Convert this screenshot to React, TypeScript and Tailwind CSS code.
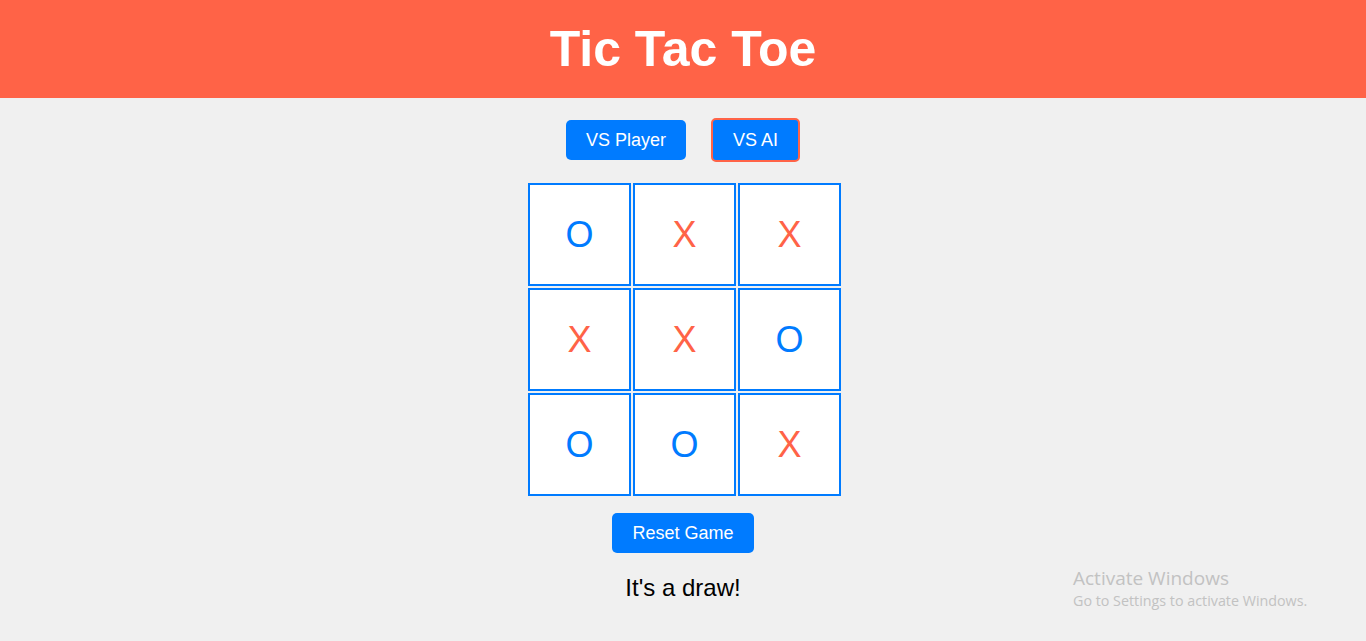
import React, { useState } from "react";

type Cell = "X" | "O" | null;

const START: Cell[] = ["O", "X", "X", "X", "X", "O", "O", "O", "X"];

export default function App() {
  const [board, setBoard] = useState<Cell[]>(START);
  const [mode, setMode] = useState<"player" | "ai">("ai");

  const reset = () => setBoard(Array(9).fill(null));

  return (
    <div className="min-h-[641px] bg-[#f0f0f0] font-['Liberation_Sans',Arial,sans-serif] text-black relative">
      <header className="h-[98px] bg-[#ff6347] flex items-center justify-center">
        <h1 className="text-[50px] font-bold text-white leading-none">Tic Tac Toe</h1>
      </header>

      <div className="flex flex-col items-center">
        <div className="mt-[20px] h-[44px] flex items-center gap-[25px]">
          <button
            type="button"
            onClick={() => setMode("player")}
            className={`px-[20px] rounded-[5px] bg-[#007bff] text-white text-[18px] ${
              mode === "player" ? "h-[44px] border-2 border-[#ff6347]" : "h-[40px]"
            }`}
          >
            VS Player
          </button>
          <button
            type="button"
            onClick={() => setMode("ai")}
            className={`px-[20px] rounded-[5px] bg-[#007bff] text-white text-[18px] ${
              mode === "ai" ? "h-[44px] border-2 border-[#ff6347]" : "h-[40px]"
            }`}
          >
            VS AI
          </button>
        </div>

        <div className="mt-[21px] ml-[3px] grid grid-cols-[repeat(3,103px)] gap-[2px]">
          {board.map((c, i) => (
            <button
              key={i}
              type="button"
              onClick={() => {
                if (c) return;
                const next = [...board];
                next[i] = "X";
                setBoard(next);
              }}
              className={`h-[103px] w-[103px] bg-white border-2 border-[#007bff] flex items-center justify-center text-[36px] ${
                c === "X" ? "text-[#ff6347]" : "text-[#007bff]"
              }`}
            >
              {c}
            </button>
          ))}
        </div>

        <button
          type="button"
          onClick={reset}
          className="mt-[17px] h-[40px] px-[20px] rounded-[5px] bg-[#007bff] text-white text-[18px]"
        >
          Reset Game
        </button>

        <p className="mt-[17px] text-[24px]">It's a draw!</p>
      </div>

      <div className="absolute left-[1073px] top-[566px] text-[#c2c2c2] font-['Open_Sans',sans-serif] pointer-events-none">
        <div className="text-[19px] leading-[25px]">Activate Windows</div>
        <div className="text-[14.3px] leading-[20px]">Go to Settings to activate Windows.</div>
      </div>
    </div>
  );
}
